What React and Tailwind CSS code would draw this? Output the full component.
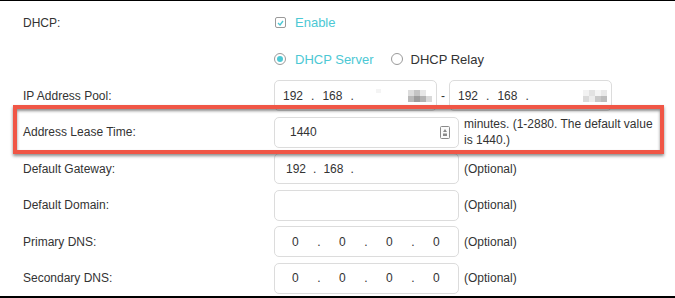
import React from "react";

const teal = "text-[#4cc8d4]";

const Row = ({ label, children, className = "" }) => (
  <div className={"flex items-center h-[36.5px] pl-[23px] " + className}>
    <div className="w-[251px] shrink-0">{label}</div>
    {children}
  </div>
);

const Box = ({ className = "", children }) => (
  <div
    className={
      "h-[31px] border border-[#dcdcdc] rounded-[5px] bg-white flex items-center shrink-0 " +
      className
    }
  >
    {children}
  </div>
);

const Mosaic = ({ cells }) => (
  <div className="grid grid-cols-4 w-[24px] h-[12px]">
    {cells.map((c, i) => (
      <div key={i} style={{ background: c }} />
    ))}
  </div>
);

const Zeros = () => (
  <Box className="w-[185px] pl-[17px] gap-[18.5px]">
    <span>0</span>
    <span>.</span>
    <span>0</span>
    <span>.</span>
    <span>0</span>
    <span>.</span>
    <span>0</span>
  </Box>
);

const Optional = () => <span className="ml-[5px]">(Optional)</span>;

export default function App() {
  return (
    <div className="w-[675px] h-[298px] overflow-hidden bg-white border-t border-black border-b-2 pt-[3.5px] text-[12px] text-[#333] font-['Liberation_Sans',Arial,sans-serif]">
      <Row label="DHCP:">
        <div className="ml-[1px] w-[11px] h-[11px] border border-[#9a9a9a] rounded-[2px] flex items-center justify-center">
          <svg width="7" height="6" viewBox="0 0 7 6">
            <path d="M1 3 L3 5 L6 1" fill="none" stroke="#4cc8d4" strokeWidth="1.4" />
          </svg>
        </div>
        <span className={"ml-[9px] text-[13px] " + teal}>Enable</span>
      </Row>

      <Row label="">
        <div className="w-[12px] h-[12px] rounded-full border border-[#9a9a9a] flex items-center justify-center">
          <div className="w-[6px] h-[6px] rounded-full bg-[#4cc8d4]" />
        </div>
        <span className={"ml-[9px] text-[13px] " + teal}>DHCP Server</span>
        <div className="ml-[17px] w-[12px] h-[12px] rounded-full border border-[#9a9a9a]" />
        <span className="ml-[8px] text-[13px]">DHCP Relay</span>
      </Row>

      <Row label="IP Address Pool:">
        <Box className="w-[163px] pl-[8px] pr-[4px] gap-[8px]">
          <span>192</span>
          <span>.</span>
          <span>168</span>
          <span>.</span>
          <div className="ml-[14px] w-[5px] h-[4px] bg-[#f4f4f4] self-start mt-[8px]" />
          <div className="ml-auto">
            <Mosaic
              cells={[
                "#dcdcdc", "#c4c4c4", "#e6e6e6", "#ffffff",
                "#b9b9b9", "#9d9d9d", "#b3b3b3", "#d9d9d9",
              ]}
            />
          </div>
        </Box>
        <span className="w-[12px] text-center">-</span>
        <Box className="w-[163px] pl-[8px] pr-[4px] gap-[8px]">
          <span>192</span>
          <span>.</span>
          <span>168</span>
          <span>.</span>
          <div className="ml-auto">
            <Mosaic
              cells={[
                "#f2f2f2", "#e2e2e2", "#f4f4f4", "#e8e8e8",
                "#dadada", "#ececec", "#c9c9c9", "#bdbdbd",
              ]}
            />
          </div>
        </Box>
      </Row>

      <Row label="Address Lease Time:" className="relative">
        <Box className="w-[185px] h-[30px] pl-[15px] pr-[8px] justify-between">
          <span>1440</span>
          <svg width="10" height="13" viewBox="0 0 10 13">
            <rect x="0.5" y="0.5" width="9" height="12" rx="1" fill="#fafafa" stroke="#8a8a8a" />
            <path d="M5 3 L7 6 L3 6 Z" fill="#8a8a8a" />
            <rect x="3" y="7.5" width="4" height="2.5" fill="#8a8a8a" />
          </svg>
        </Box>
        <p className="ml-[5px] w-[195px] leading-[16px]">
          minutes. (1-2880. The default value is 1440.)
        </p>
        <div className="absolute left-[13px] right-[11px] top-[-9px] bottom-[-3.5px] border-4 border-[#f05646] shadow-[0_2px_3px_rgba(0,0,0,0.45),inset_0_2px_3px_rgba(0,0,0,0.45)] pointer-events-none" />
      </Row>

      <Row label="Default Gateway:">
        <Box className="w-[185px] pl-[11px] gap-[7px]">
          <span>192</span>
          <span>.</span>
          <span>168</span>
          <span>.</span>
        </Box>
        <Optional />
      </Row>

      <Row label="Default Domain:">
        <Box className="w-[185px]" />
        <Optional />
      </Row>

      <Row label="Primary DNS:">
        <Zeros />
        <Optional />
      </Row>

      <Row label="Secondary DNS:">
        <Zeros />
        <Optional />
      </Row>
    </div>
  );
}
